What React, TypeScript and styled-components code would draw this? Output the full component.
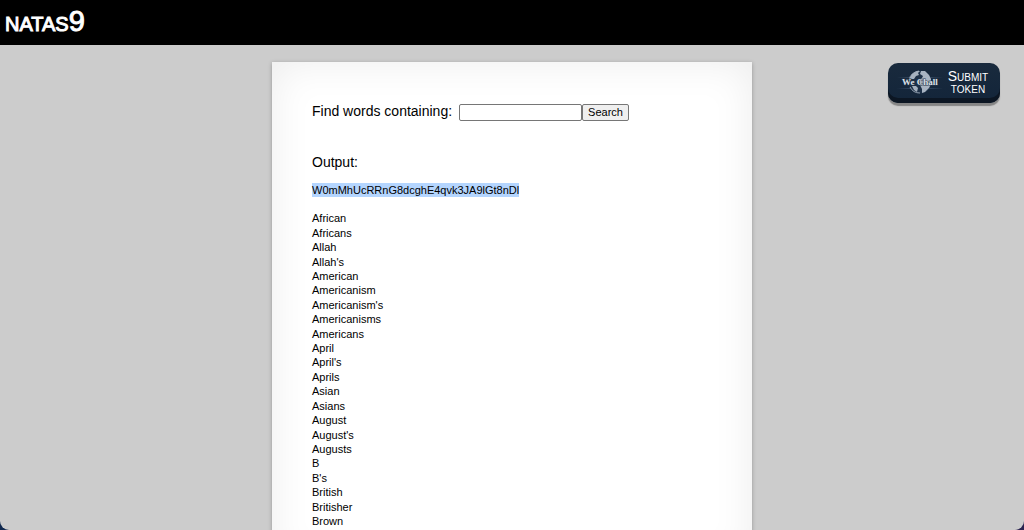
import React from "react";
import styled, { createGlobalStyle } from "styled-components";

const GlobalStyle = createGlobalStyle`
  * { box-sizing: border-box; }
  body {
    margin: 0;
    background: linear-gradient(90deg, #10294f, #2a2350);
    color: #000;
    font-family: "Liberation Sans", Arial, sans-serif;
  }
`;

const Page = styled.div`
  display: flex;
  flex-direction: column;
  height: 100vh;
  overflow: hidden;
  background: #ccc;
  border-radius: 0 0 9px 9px;
`;

const Header = styled.header`
  flex: none;
  height: 45px;
  padding: 5px;
  background: #000;
`;

const Title = styled.h1`
  margin: 0;
  color: #fff;
  font-size: 29px;
  font-weight: 400;
  font-variant: small-caps;
  line-height: 32px;
  -webkit-text-stroke: 1px #fff;
`;

const Main = styled.main`
  flex: 1;
  display: grid;
  grid-template-columns: 1fr minmax(0, 480px) 1fr;
  align-items: start;
  min-height: 0;
  padding-top: 17px;
`;

const Card = styled.section`
  grid-column: 2;
  min-height: 100%;
  padding: 40px;
  background: #fff;
  box-shadow: 0 1px 4px rgba(0, 0, 0, 0.27), inset 0 0 40px rgba(0, 0, 0, 0.08);
`;

const SearchForm = styled.form`
  display: flex;
  align-items: center;
  height: 20px;
  font-size: 14px;
`;

const Label = styled.label`
  margin-right: 7px;
  line-height: 20px;
  padding-bottom: 2px;
`;

const TextBox = styled.input`
  width: 123px;
  height: 17px;
  padding: 1px 2px;
  border: 1px solid #767676;
  border-radius: 2px;
  background: #fff;
  font: 11px "Liberation Sans", Arial, sans-serif;
`;

const SearchButton = styled.button`
  height: 17px;
  padding: 0 5px;
  border: 1px solid #767676;
  border-radius: 2px;
  background: #efefef;
  color: #000;
  font: 11px "Liberation Sans", Arial, sans-serif;
`;

const OutputLabel = styled.h2`
  margin: 30px 0 11px;
  font-size: 14px;
  font-weight: 400;
  line-height: 20px;
`;

const Output = styled.div`
  font-size: 11px;
  line-height: 1.31;
`;

const Selected = styled.mark`
  display: inline-block;
  background: #b4d5fe;
  color: #000;
`;

const WordList = styled.ul`
  margin: 14px 0 0;
  padding: 0;
  list-style: none;
`;

const TokenLink = styled.a`
  grid-column: 3;
  justify-self: end;
  display: flex;
  align-items: center;
  gap: 4px;
  width: 112px;
  height: 40px;
  margin: 1px 24px 0 0;
  padding: 0 11px 3px 9px;
  border-radius: 10px;
  background: linear-gradient(#192a3d, #13253a);
  box-shadow: inset 0 -5px 0 #0c1623, 0 3px 1px #858585;
  color: #fff;
  text-decoration: none;
`;

const TokenText = styled.span`
  flex: 1;
  font-size: 14px;
  font-variant: small-caps;
  line-height: 12px;
  text-align: center;
`;

const words = [
  "African", "Africans", "Allah", "Allah's", "American", "Americanism",
  "Americanism's", "Americanisms", "Americans", "April", "April's", "Aprils",
  "Asian", "Asians", "August", "August's", "Augusts", "B", "B's", "British",
  "Britisher", "Brown",
];

function WeChallLogo() {
  return (
    <svg width="46" height="28" viewBox="0 0 46 28" role="img" aria-label="We Chall">
      <defs>
        <linearGradient id="beam">
          <stop offset="0" stopColor="#7895b8" stopOpacity="0" />
          <stop offset="0.5" stopColor="#7895b8" stopOpacity="0.5" />
          <stop offset="1" stopColor="#7895b8" stopOpacity="0" />
        </linearGradient>
      </defs>
      <rect x="0" y="9" width="46" height="1" fill="url(#beam)" />
      <rect x="0" y="20" width="46" height="1" fill="url(#beam)" />
      <circle cx="23" cy="14" r="11.5" fill="#1d3047" />
      <path d="M12 12A11 11 0 0 1 22 3M13 19A11 11 0 0 0 23 25" fill="none" stroke="#8f9dad" strokeWidth="1" />
      <path d="M12 11 15 6 20 3 23 3 21 5 22 7 19 8 17 11Z" fill="#a5b1be" />
      <path d="M24 3 28 3 32 7 34 11 34 16 32 20 28 24 25 25 25 21 23 17 22 12 25 10 26 8 23 6Z" fill="#a8b4c2" />
      <path d="M15 18 19 18 21 20 20 24 17 22Z" fill="#a4b0be" />
      <text x="5" y="17" fill="#dce1e8" stroke="#25374c" strokeWidth="1" paintOrder="stroke" fontFamily="Liberation Serif, serif" fontSize="9" fontWeight="700">We Chall</text>
    </svg>
  );
}

export default function App() {
  return (
    <>
      <GlobalStyle />
      <Page>
        <Header>
          <Title>natas9</Title>
        </Header>
        <Main>
          <Card>
            <SearchForm onSubmit={(event) => event.preventDefault()}>
              <Label htmlFor="needle">Find words containing:</Label>
              <TextBox id="needle" name="needle" type="text" />
              <SearchButton type="submit">Search</SearchButton>
            </SearchForm>
            <OutputLabel>Output:</OutputLabel>
            <Output>
              <Selected>W0mMhUcRRnG8dcghE4qvk3JA9lGt8nDl</Selected>
              <WordList>
                {words.map((word) => (
                  <li key={word}>{word}</li>
                ))}
              </WordList>
            </Output>
          </Card>
          <TokenLink href="#submit-token">
            <WeChallLogo />
            <TokenText>Submit token</TokenText>
          </TokenLink>
        </Main>
      </Page>
    </>
  );
}
